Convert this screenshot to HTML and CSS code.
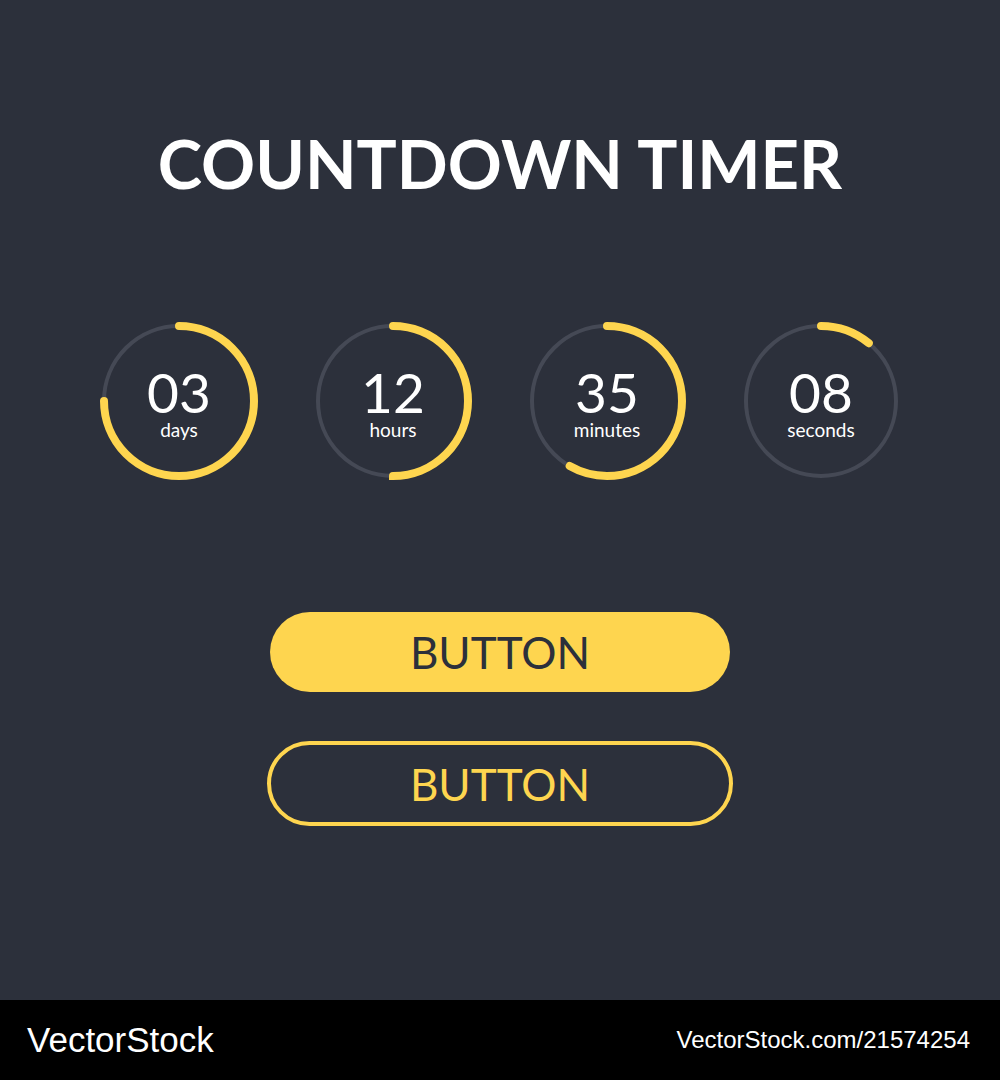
FILE: index.html
```html
<!DOCTYPE html>
<html lang="en">
<head>
  <meta charset="UTF-8">
  <title>Countdown Timer</title>
  <link rel="stylesheet" href="styles.css">
</head>
<body>
  <!-- TIMER PANEL -->
  <div class="timer-page">
    <h1>COUNTDOWN TIMER</h1>

    <div class="countdown">
      <div class="dial">
        <svg viewBox="0 0 160 160" width="160" height="160">
          <circle class="dial-track" cx="80" cy="80" r="75"></circle>
          <circle class="dial-progress" cx="80" cy="80" r="75" pathLength="100" stroke-dasharray="75 100" transform="rotate(-90 80 80)"></circle>
        </svg>
        <div class="dial-text">
          <span class="dial-value">03</span>
          <span class="dial-unit">days</span>
        </div>
      </div>

      <div class="dial">
        <svg viewBox="0 0 160 160" width="160" height="160">
          <circle class="dial-track" cx="80" cy="80" r="75"></circle>
          <circle class="dial-progress" cx="80" cy="80" r="75" pathLength="100" stroke-dasharray="50 100" transform="rotate(-90 80 80)"></circle>
        </svg>
        <div class="dial-text">
          <span class="dial-value">12</span>
          <span class="dial-unit">hours</span>
        </div>
      </div>

      <div class="dial">
        <svg viewBox="0 0 160 160" width="160" height="160">
          <circle class="dial-track" cx="80" cy="80" r="75"></circle>
          <circle class="dial-progress" cx="80" cy="80" r="75" pathLength="100" stroke-dasharray="58.3 100" transform="rotate(-90 80 80)"></circle>
        </svg>
        <div class="dial-text">
          <span class="dial-value">35</span>
          <span class="dial-unit">minutes</span>
        </div>
      </div>

      <div class="dial">
        <svg viewBox="0 0 160 160" width="160" height="160">
          <circle class="dial-track" cx="80" cy="80" r="75"></circle>
          <circle class="dial-progress" cx="80" cy="80" r="75" pathLength="100" stroke-dasharray="11 100" transform="rotate(-90 80 80)"></circle>
        </svg>
        <div class="dial-text">
          <span class="dial-value">08</span>
          <span class="dial-unit">seconds</span>
        </div>
      </div>
    </div>

    <button class="btn-fill">BUTTON</button>
    <button class="btn-outline">BUTTON</button>
  </div>

  <!-- RODAPÉ -->
  <div class="footer">
    <span class="footer-logo">VectorStock</span>
    <span class="footer-id">VectorStock.com/21574254</span>
  </div>
</body>
</html>
```

FILE: styles.css
```css
body {
  margin: 0;
  padding: 0;
  background-color: #2c303b;
  font-family: 'Lato', 'Open Sans', sans-serif;
}

.timer-page {
  height: 1000px;
  box-sizing: border-box;
  padding-top: 130px;
  display: flex;
  flex-direction: column;
  align-items: center;
}

.timer-page h1 {
  margin: 0;
  color: #ffffff;
  font-size: 67px;
  font-weight: bold;
  line-height: 1;
}

.countdown {
  display: flex;
  gap: 54px;
  margin-top: 124px;
}

.dial {
  display: grid;
  width: 160px;
  height: 160px;
}

.dial svg,
.dial-text {
  grid-area: 1 / 1;
}

.dial-track {
  fill: none;
  stroke: #454955;
  stroke-width: 4;
}

.dial-progress {
  fill: none;
  stroke: #fed54f;
  stroke-width: 8;
  stroke-linecap: round;
}

.dial-text {
  display: flex;
  flex-direction: column;
  align-items: center;
  justify-content: center;
  padding-top: 6px;
  color: #ffffff;
}

.dial-value {
  font-size: 55px;
  line-height: 52px;
}

.dial-unit {
  font-size: 19px;
  line-height: 24px;
}

.btn-fill,
.btn-outline {
  font-family: 'Lato', 'Open Sans', sans-serif;
  font-size: 44px;
  line-height: 1;
  padding: 0;
  cursor: pointer;
}

.btn-fill {
  width: 460px;
  height: 80px;
  margin-top: 131px;
  background-color: #fed54f;
  color: #2c303b;
  border: none;
  border-radius: 40px;
}

.btn-outline {
  width: 466px;
  height: 85px;
  margin-top: 49px;
  background-color: transparent;
  color: #fed54f;
  border: 4px solid #fed54f;
  border-radius: 43px;
}

.footer {
  height: 80px;
  background-color: #000000;
  display: flex;
  justify-content: space-between;
  align-items: center;
  padding: 0 30px 0 27px;
  color: #ffffff;
  font-family: 'Liberation Sans', Arial, sans-serif;
}

.footer-logo {
  font-size: 35px;
}

.footer-id {
  font-size: 24px;
}
```
